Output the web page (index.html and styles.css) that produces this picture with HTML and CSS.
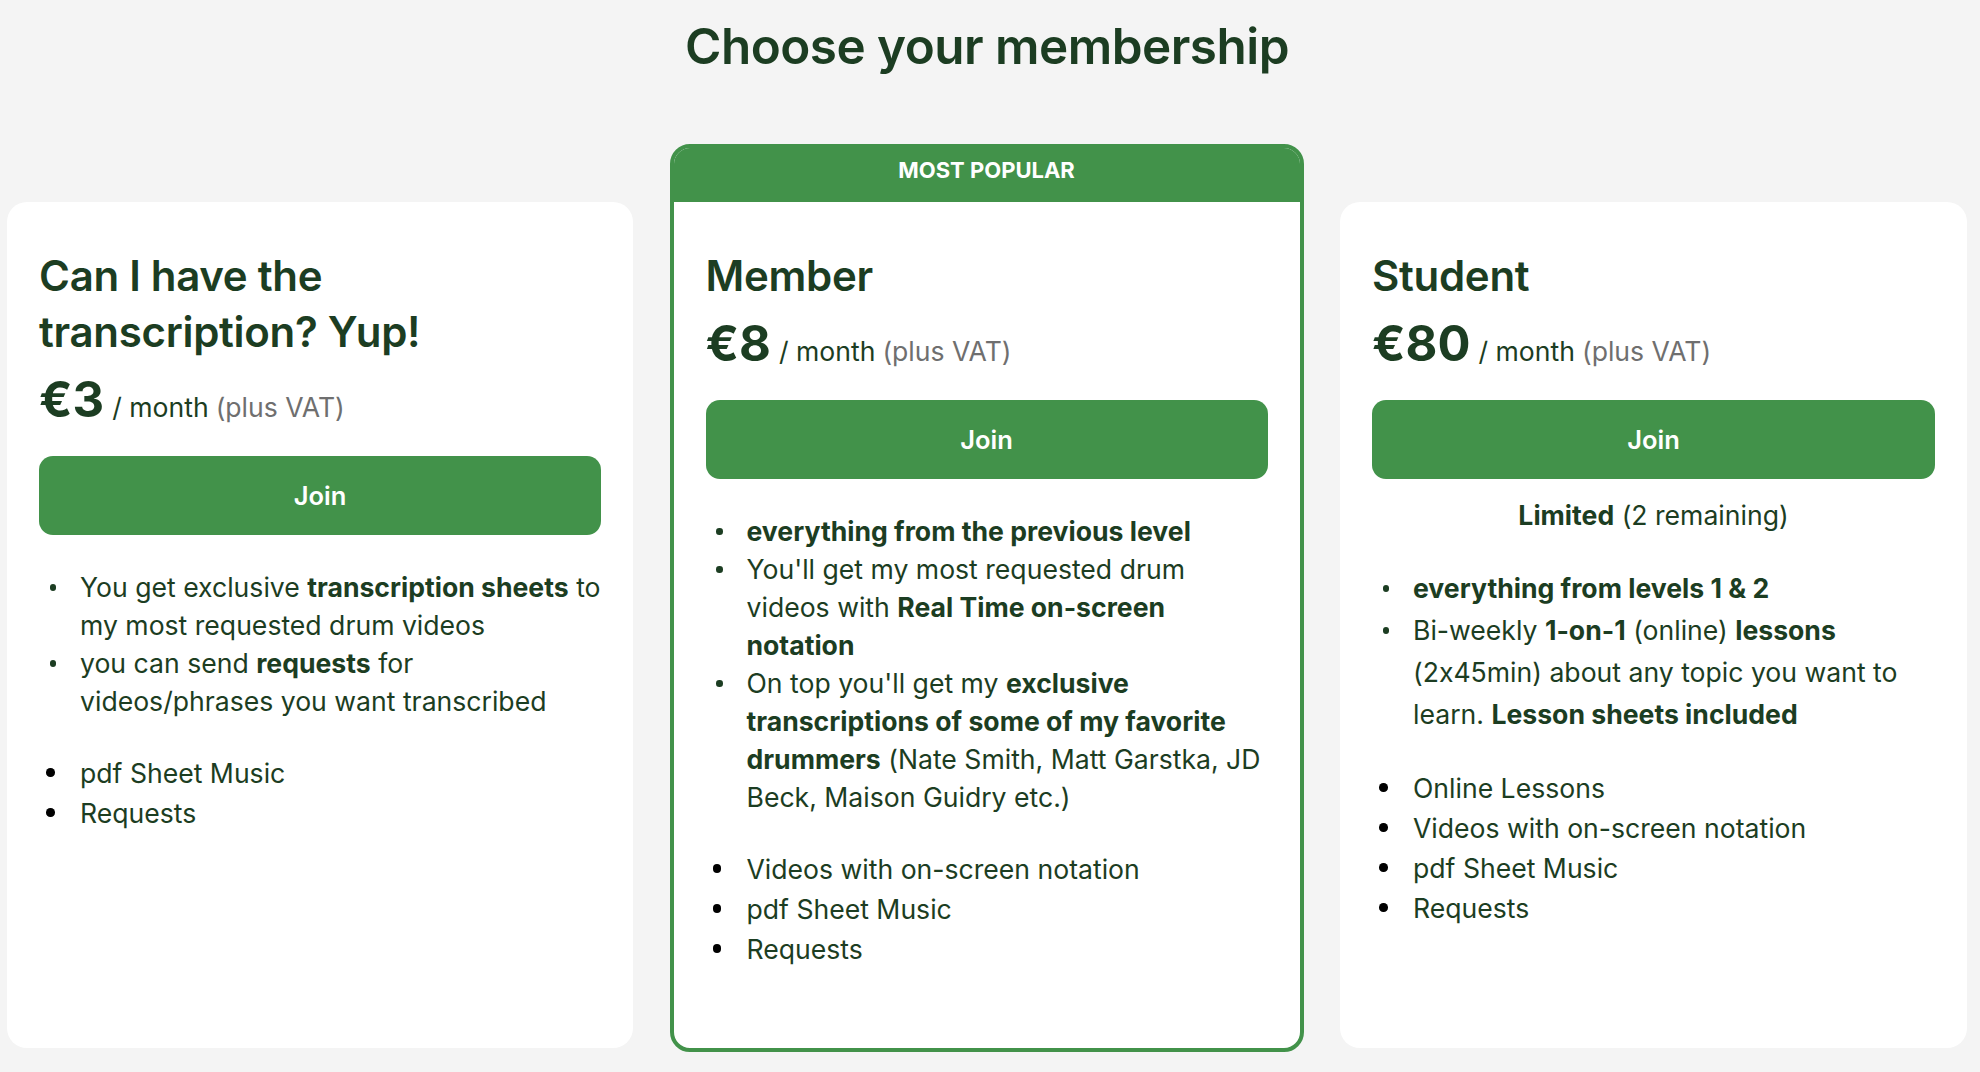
FILE: index.html
```html
<!DOCTYPE html>
<html lang="en">
<head>
<meta charset="utf-8">
<title>Choose your membership</title>
<link rel="stylesheet" href="styles.css">
</head>
<body>
<main class="page">
  <h1 class="page-title">Choose your membership</h1>
  <div class="tiers">
    <section class="card">
      <h2 class="tier-name">Can I have the transcription? Yup!</h2>
      <div class="price"><span class="amount">€3</span><span class="period">/ month</span><span class="vat">(plus VAT)</span></div>
      <a class="join" href="#">Join</a>
      <ul class="perks">
        <li><span>You get exclusive <strong>transcription sheets</strong> to my most requested drum videos</span></li>
        <li><span>you can send <strong>requests</strong> for videos/phrases you want transcribed</span></li>
      </ul>
      <ul class="benefits">
        <li><span>pdf Sheet Music</span></li>
        <li><span>Requests</span></li>
      </ul>
    </section>

    <section class="card popular">
      <div class="badge">MOST POPULAR</div>
      <div class="card-body">
        <h2 class="tier-name">Member</h2>
        <div class="price"><span class="amount">€8</span><span class="period">/ month</span><span class="vat">(plus VAT)</span></div>
        <a class="join" href="#">Join</a>
        <ul class="perks">
          <li><span><strong>everything from the previous level</strong></span></li>
          <li><span>You'll get my most requested drum videos with <strong>Real Time on-screen notation</strong></span></li>
          <li><span>On top you'll get my <strong>exclusive transcriptions of some of my favorite drummers</strong> (Nate Smith, Matt Garstka, JD Beck, Maison Guidry etc.)</span></li>
        </ul>
        <ul class="benefits">
          <li><span>Videos with on-screen notation</span></li>
          <li><span>pdf Sheet Music</span></li>
          <li><span>Requests</span></li>
        </ul>
      </div>
    </section>

    <section class="card">
      <h2 class="tier-name">Student</h2>
      <div class="price"><span class="amount">€80</span><span class="period">/ month</span><span class="vat">(plus VAT)</span></div>
      <a class="join" href="#">Join</a>
      <p class="limited"><strong>Limited</strong> (2 remaining)</p>
      <ul class="perks wide">
        <li><span><strong>everything from levels 1 &amp; 2</strong></span></li>
        <li><span>Bi-weekly <strong>1-on-1</strong> (online) <strong>lessons</strong> (2x45min) about any topic you want to learn. <strong>Lesson sheets included</strong></span></li>
      </ul>
      <ul class="benefits">
        <li><span>Online Lessons</span></li>
        <li><span>Videos with on-screen notation</span></li>
        <li><span>pdf Sheet Music</span></li>
        <li><span>Requests</span></li>
      </ul>
    </section>
  </div>
</main>
</body>
</html>
```
FILE: styles.css
```css
* { box-sizing: border-box; }

html, body {
  margin: 0;
  background: #f4f4f4;
}

body {
  font-family: Inter, "Liberation Sans", sans-serif;
  font-feature-settings: "calt" 0;
  color: #1c3d22;
  font-size: 26.6px;
}

.page {
  padding: 0 13px 0 7px;
}

.page-title {
  margin: 16px 0 0;
  font-size: 49.4px;
  line-height: 60px;
  font-weight: 600;
  letter-spacing: -0.5px;
  text-align: center;
  color: #1c3d22;
}

.tiers {
  margin-top: 68px;
  display: grid;
  grid-template-columns: 626px 634px 627px;
  column-gap: 36.5px;
  align-items: start;
}

.card {
  background: #fff;
  border-radius: 20px;
  height: 846px;
  margin-top: 58px;
  padding: 46px 32px 0;
}

.card.popular {
  margin-top: 0;
  height: 908px;
  padding: 0;
  border: 4px solid #42924a;
  overflow: hidden;
}

.badge {
  height: 54px;
  background: #42924a;
  color: #fff;
  font-size: 22px;
  font-weight: 700;
  display: flex;
  align-items: center;
  justify-content: center;
  padding-bottom: 10px;
}

.card-body {
  padding: 46px 32px 0;
}

.tier-name {
  margin: 0;
  font-size: 42px;
  line-height: 56px;
  font-weight: 600;
  letter-spacing: -0.3px;
}

.price {
  margin-top: 12px;
  display: flex;
  align-items: baseline;
  height: 56px;
  line-height: 56px;
}

.amount {
  font-size: 49px;
  font-weight: 700;
  margin-right: 8px;
}

.period {
  font-size: 26.6px;
  line-height: 30px;
  margin-right: 7px;
}

.vat {
  font-size: 26.6px;
  line-height: 30px;
  color: #6f6f6f;
}

.join {
  margin-top: 28px;
  height: 79px;
  border-radius: 14px;
  background: #42924a;
  color: #fff;
  text-decoration: none;
  font-size: 25.5px;
  font-weight: 600;
  display: flex;
  align-items: center;
  justify-content: center;
}

.limited {
  margin: 17px 0 0;
  text-align: center;
  line-height: 38px;
}

strong {
  font-weight: 700;
}

ul {
  list-style: none;
  margin: 33px 0 0;
  padding: 0;
}

li {
  display: grid;
  grid-template-columns: 41px 1fr;
  align-items: start;
}

li::before {
  content: "";
  border-radius: 50%;
}

.perks li {
  line-height: 38px;
}

.perks li::before {
  width: 6.5px;
  height: 6.5px;
  margin: 16px 0 0 10.5px;
  background: #1c3d22;
}

.perks.wide li {
  line-height: 42px;
}

.perks.wide li::before {
  margin-top: 18px;
}

.benefits li {
  line-height: 40px;
}

.benefits li::before {
  width: 8.5px;
  height: 8.5px;
  margin: 15px 0 0 7px;
  background: #000;
}
```
